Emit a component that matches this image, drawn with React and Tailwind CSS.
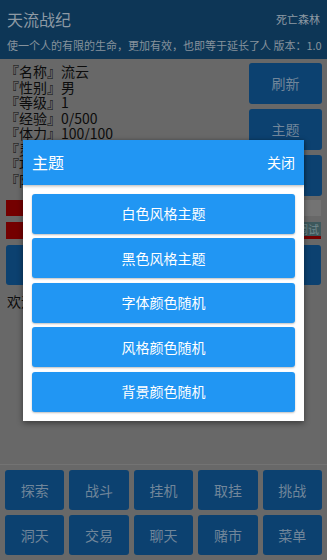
import React, { useState } from "react";

const info = [
  ["名称", "流云"],
  ["性别", "男"],
  ["等级", "1"],
  ["经验", "0/500"],
  ["体力", "100/100"],
  ["灵力", "100/100"],
  ["攻击", "10"],
  ["防御", "5"],
];

const sideButtons = ["刷新", "主题", "背包"];

const bottomButtons = [
  "探索",
  "战斗",
  "挂机",
  "取挂",
  "挑战",
  "洞天",
  "交易",
  "聊天",
  "赌市",
  "菜单",
];

const themeOptions = [
  "白色风格主题",
  "黑色风格主题",
  "字体颜色随机",
  "风格颜色随机",
  "背景颜色随机",
];

const App = () => {
  const [open, setOpen] = useState(true);

  return (
    <div
      className="relative w-[327px] h-[560px] flex flex-col bg-[#686868] overflow-hidden"
      style={{ fontFamily: '"Noto Sans CJK SC", "Noto Sans", sans-serif' }}
    >
      {/* header */}
      <div className="h-[59px] bg-[#0d3656] px-[7px] flex flex-col">
        <div className="flex items-center justify-between h-[38px]">
          <span className="text-[16px] text-[#8e9aa4]">天流战纪</span>
          <span className="text-[11px] text-[#8e9aa4]">死亡森林</span>
        </div>
        <div className="text-[11px] text-[#86929c] whitespace-nowrap leading-[14px]">
          使一个人的有限的生命，更加有效，也即等于延长了人 版本：1.0
        </div>
      </div>

      {/* info + side buttons */}
      <div className="flex">
        <div className="flex-1 pl-[5px] pt-[5px] text-[14px] leading-[15.5px] text-[#0c0c0c]">
          {info.map(([k, v]) => (
            <div key={k}>
              『{k}』{v}
            </div>
          ))}
        </div>
        <div className="w-[73px] mr-[5px] mt-[4px] flex flex-col gap-[5px]">
          {sideButtons.map((b) => (
            <button
              key={b}
              className="h-[41px] rounded-[3px] bg-[#0c4170] text-[14px] text-[#71869a]"
            >
              {b}
            </button>
          ))}
        </div>
      </div>

      {/* bars */}
      <div className="mx-[6px] mt-[4px] h-[16px] bg-[#737373] flex">
        <div className="w-[60%] bg-[#740000]" />
      </div>
      <div className="mx-[6px] mt-[6px] h-[17px] bg-[#740000] flex justify-end items-start">
        <span className="h-[14px] px-[2px] bg-[#3d585c] text-[11px] leading-[14px] text-[#73888c]">
          调试
        </span>
      </div>

      <button className="mx-[6px] mt-[6px] h-[40px] rounded-[3px] bg-[#0c4170] text-[14px] text-[#71869a]">
        修炼
      </button>

      <div className="px-[7px] mt-[6px] text-[14px] text-[#0c0c0c]">
        欢迎来到天流战纪
      </div>

      <div className="flex-1" />

      {/* bottom grid */}
      <div className="border-t border-[#737373] pt-[5px] px-[5px] pb-[5px] grid grid-cols-5 gap-[5px]">
        {bottomButtons.map((b) => (
          <button
            key={b}
            className="h-[40px] rounded-[3px] bg-[#0c4170] text-[14px] text-[#71869a]"
          >
            {b}
          </button>
        ))}
      </div>

      {open && (
        <div className="absolute inset-0 flex items-center justify-center">
          <div className="w-[281px] bg-white shadow-[0_2px_6px_rgba(0,0,0,0.45)]">
            <div className="h-[45px] bg-[#2196f3] flex items-center justify-between px-[9px] shadow-[0_1px_3px_rgba(0,0,0,0.3)]">
              <span className="text-[16px] text-white">主题</span>
              <button
                className="text-[14px] text-white"
                onClick={() => setOpen(false)}
              >
                关闭
              </button>
            </div>
            <div className="p-[9px] flex flex-col gap-[4.5px]">
              {themeOptions.map((t) => (
                <button
                  key={t}
                  className="h-[40px] rounded-[3px] bg-[#2196f3] text-[14px] text-white shadow-[0_1px_2px_rgba(0,0,0,0.25)]"
                >
                  {t}
                </button>
              ))}
            </div>
          </div>
        </div>
      )}
    </div>
  );
};

export default App;
